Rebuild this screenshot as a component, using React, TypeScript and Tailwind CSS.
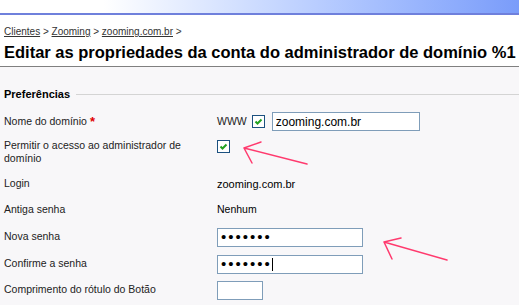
import React from 'react';

function Check() {
  return (
    <span className="inline-flex h-[13px] w-[13px] items-center justify-center border border-[#1c5180] bg-white">
      <svg width="9" height="9" viewBox="0 0 9 9">
        <path d="M1.5 4.5 L3.5 6.5 L7.5 2.5" fill="none" stroke="#21a121" strokeWidth="2" />
      </svg>
    </span>
  );
}

const inputCls = 'h-[19px] border border-[#7f9db9] bg-white px-[3px] text-black outline-none';

export default function App() {
  return (
    <div className="relative h-[305px] w-[519px] overflow-hidden bg-[#f8f7f9] font-['Liberation_Sans',Arial,sans-serif] text-[10.5px] text-[#222]">
      <div className="h-[13px] bg-gradient-to-r from-white from-[20%] to-[#7a9cfa]" />
      <div className="h-[2px] bg-[#6f80dc]" />

      <div className="border-b border-[#808080] bg-white px-[4px] pb-[4px] pt-[10px]">
        <div className="text-[10px] leading-[13px] text-[#333]">
          <span className="underline">Clientes</span> &gt; <span className="underline">Zooming</span> &gt;{' '}
          <span className="underline">zooming.com.br</span> &gt;
        </div>
        <h1 className="mt-[4px] whitespace-nowrap text-[16.5px] font-bold leading-[20px] text-black">
          Editar as propriedades da conta do administrador de domínio %1
        </h1>
      </div>

      <div className="px-[4px] pt-[19px]">
        <div className="flex items-center gap-[6px] pb-[6px]">
          <span className="text-[11px] font-bold text-black">Preferências</span>
          <div className="mr-[-4px] h-px flex-1 bg-[#d4d4d4]" />
        </div>

        <div className="grid grid-cols-[213px_1fr]">
          <div className="flex h-[26px] items-center">
            Nome do domínio <span className="ml-[3px] text-[13px] font-bold text-[#e00000]">*</span>
          </div>
          <div className="flex h-[26px] items-center">
            <span className="mr-[5px]">WWW</span>
            <Check />
            <input className={`${inputCls} ml-[7px] w-[148px] text-[12px]`} defaultValue="zooming.com.br" readOnly />
          </div>

          <div className="h-[37px] pt-[4px] leading-[13px]">Permitir o acesso ao administrador de domínio</div>
          <div className="h-[37px] pt-[5px]">
            <Check />
          </div>

          <div className="flex h-[25px] items-center">Login</div>
          <div className="flex h-[25px] items-center text-[11px] text-black">zooming.com.br</div>

          <div className="flex h-[27px] items-center">Antiga senha</div>
          <div className="flex h-[27px] items-center text-black">Nenhum</div>

          <div className="flex h-[28px] items-center pb-[2px]">Nova senha</div>
          <div className="flex h-[28px] items-center">
            <input type="password" className={`${inputCls} w-[146px] text-[15px] tracking-[2px]`} defaultValue="1234567" readOnly />
          </div>

          <div className="flex h-[26px] items-center pb-[2px]">Confirme a senha</div>
          <div className="flex h-[26px] items-center">
            <div className="relative">
              <input type="password" className={`${inputCls} w-[146px] text-[15px] tracking-[2px]`} defaultValue="1234567" readOnly />
              <span className="absolute left-[55px] top-[3px] h-[13px] w-px bg-black" />
            </div>
          </div>

          <div className="flex h-[26px] items-center pb-[2px]">Comprimento do rótulo do Botão</div>
          <div className="flex h-[26px] items-center">
            <input className={`${inputCls} w-[46px]`} readOnly />
          </div>
        </div>
      </div>

      <svg className="pointer-events-none absolute left-0 top-0" width="519" height="305">
        <g fill="none" stroke="#ff3a6e" strokeWidth="1.5" strokeLinecap="round">
          <path d="M307 164 L244 148 M244 148 L261 142 M244 148 L252 163" />
          <path d="M447 260 L384 242 M384 242 L401 238 M384 242 L392 259" />
        </g>
      </svg>
    </div>
  );
}
